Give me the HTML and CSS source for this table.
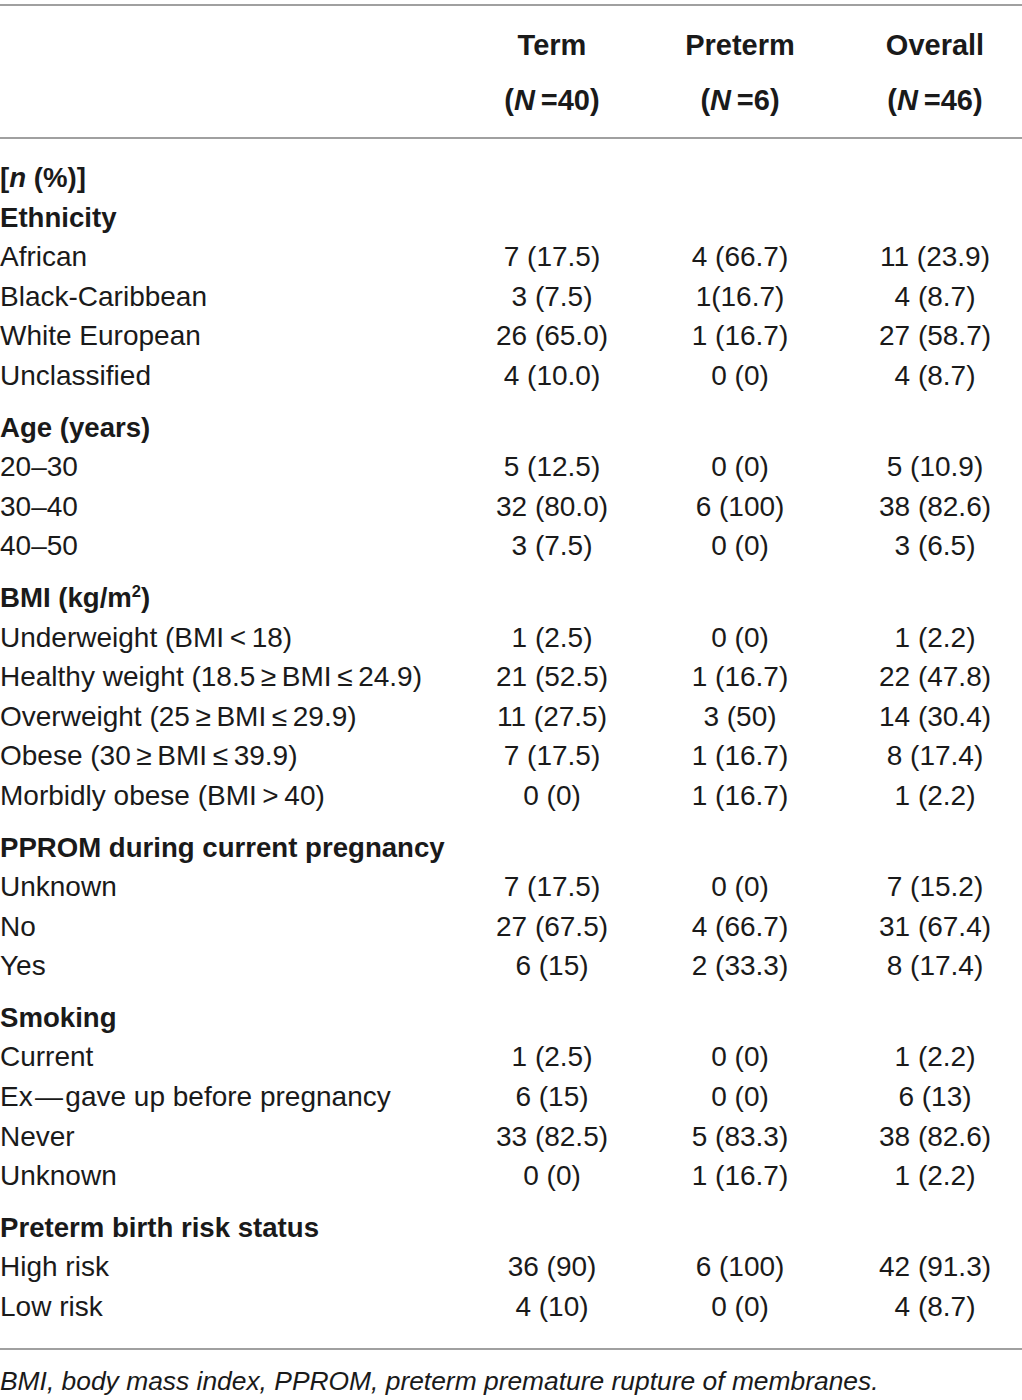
FILE: index.html
```html
<!DOCTYPE html>
<html lang="en">
<head>
<meta charset="utf-8">
<title>Table</title>
<link rel="stylesheet" href="styles.css">
</head>
<body>
<table class="tbl">
  <thead>
    <tr>
      <th class="lab"></th>
      <th class="c1">Term<br>(<i>N</i>&#8201;=40)</th>
      <th class="c2">Preterm<br>(<i>N</i>&#8201;=6)</th>
      <th class="c3">Overall<br>(<i>N</i>&#8201;=46)</th>
    </tr>
  </thead>
  <tbody>
    <tr class="first"><td class="head">[<i>n</i> (%)]</td><td></td><td></td><td class="c3"></td></tr>
    <tr><td class="head">Ethnicity</td><td></td><td></td><td class="c3"></td></tr>
    <tr><td>African</td><td>7 (17.5)</td><td>4 (66.7)</td><td class="c3">11 (23.9)</td></tr>
    <tr><td>Black-Caribbean</td><td>3 (7.5)</td><td>1(16.7)</td><td class="c3">4 (8.7)</td></tr>
    <tr><td>White European</td><td>26 (65.0)</td><td>1 (16.7)</td><td class="c3">27 (58.7)</td></tr>
    <tr><td>Unclassified</td><td>4 (10.0)</td><td>0 (0)</td><td class="c3">4 (8.7)</td></tr>
    <tr class="sec"><td class="head">Age (years)</td><td></td><td></td><td class="c3"></td></tr>
    <tr><td>20–30</td><td>5 (12.5)</td><td>0 (0)</td><td class="c3">5 (10.9)</td></tr>
    <tr><td>30–40</td><td>32 (80.0)</td><td>6 (100)</td><td class="c3">38 (82.6)</td></tr>
    <tr><td>40–50</td><td>3 (7.5)</td><td>0 (0)</td><td class="c3">3 (6.5)</td></tr>
    <tr class="sec"><td class="head">BMI (kg/m<sup>2</sup>)</td><td></td><td></td><td class="c3"></td></tr>
    <tr><td>Underweight (BMI&#8201;&lt;&#8201;18)</td><td>1 (2.5)</td><td>0 (0)</td><td class="c3">1 (2.2)</td></tr>
    <tr><td>Healthy weight (18.5&#8201;≥&#8201;BMI&#8201;≤&#8201;24.9)</td><td>21 (52.5)</td><td>1 (16.7)</td><td class="c3">22 (47.8)</td></tr>
    <tr><td>Overweight (25&#8201;≥&#8201;BMI&#8201;≤&#8201;29.9)</td><td>11 (27.5)</td><td>3 (50)</td><td class="c3">14 (30.4)</td></tr>
    <tr><td>Obese (30&#8201;≥&#8201;BMI&#8201;≤&#8201;39.9)</td><td>7 (17.5)</td><td>1 (16.7)</td><td class="c3">8 (17.4)</td></tr>
    <tr><td>Morbidly obese (BMI&#8201;&gt;&#8201;40)</td><td>0 (0)</td><td>1 (16.7)</td><td class="c3">1 (2.2)</td></tr>
    <tr class="sec"><td class="head">PPROM during current pregnancy</td><td></td><td></td><td class="c3"></td></tr>
    <tr><td>Unknown</td><td>7 (17.5)</td><td>0 (0)</td><td class="c3">7 (15.2)</td></tr>
    <tr><td>No</td><td>27 (67.5)</td><td>4 (66.7)</td><td class="c3">31 (67.4)</td></tr>
    <tr><td>Yes</td><td>6 (15)</td><td>2 (33.3)</td><td class="c3">8 (17.4)</td></tr>
    <tr class="sec"><td class="head">Smoking</td><td></td><td></td><td class="c3"></td></tr>
    <tr><td>Current</td><td>1 (2.5)</td><td>0 (0)</td><td class="c3">1 (2.2)</td></tr>
    <tr><td>Ex&#8202;—&#8202;gave up before pregnancy</td><td>6 (15)</td><td>0 (0)</td><td class="c3">6 (13)</td></tr>
    <tr><td>Never</td><td>33 (82.5)</td><td>5 (83.3)</td><td class="c3">38 (82.6)</td></tr>
    <tr><td>Unknown</td><td>0 (0)</td><td>1 (16.7)</td><td class="c3">1 (2.2)</td></tr>
    <tr class="sec"><td class="head">Preterm birth risk status</td><td></td><td></td><td class="c3"></td></tr>
    <tr><td>High risk</td><td>36 (90)</td><td>6 (100)</td><td class="c3">42 (91.3)</td></tr>
    <tr class="last"><td>Low risk</td><td>4 (10)</td><td>0 (0)</td><td class="c3">4 (8.7)</td></tr>
  </tbody>
</table>
<p class="note"><i>BMI, body mass index, PPROM, preterm premature rupture of membranes.</i></p>
</body>
</html>
```
FILE: styles.css
```css
html, body {
  margin: 0;
  padding: 0;
  background: #ffffff;
}
body {
  font-family: "Liberation Sans", Arial, sans-serif;
  color: #1a1a1a;
  font-size: 28px;
  padding-top: 4px;
}
.tbl {
  width: 1022px;
  border-collapse: collapse;
  table-layout: fixed;
}
.tbl th, .tbl td {
  padding: 0;
  text-align: center;
  white-space: nowrap;
}
.tbl th.lab { width: 458px; }
.tbl th.c1, .tbl th.c2 { width: 188px; }
.tbl th.c3 { width: 174px; }
.tbl .c3 { padding-left: 14px; }
.tbl thead tr {
  border-top: 2px solid #a0a0a0;
  border-bottom: 2px solid #a0a0a0;
}
.tbl th {
  font-weight: bold;
  font-size: 29px;
  line-height: 55px;
  padding-top: 12px;
  padding-bottom: 9px;
}
.tbl th i { font-style: italic; }
.tbl td {
  line-height: 39.6px;
}
.tbl td:first-child {
  text-align: left;
}
.tbl td.head {
  font-weight: bold;
  font-size: 27.6px;
}
.tbl tr.first td { padding-top: 19px; }
.tbl tr.sec td { padding-top: 12px; }
.tbl tr.last td { padding-bottom: 21px; }
.tbl tbody tr.last { border-bottom: 2px solid #a0a0a0; }
.tbl sup {
  font-size: 60%;
  line-height: 0;
  vertical-align: 0.6em;
}
.note {
  margin: 0;
  padding-top: 16px;
  font-size: 26.4px;
  line-height: 30px;
  color: #1a1a1a;
}
```
